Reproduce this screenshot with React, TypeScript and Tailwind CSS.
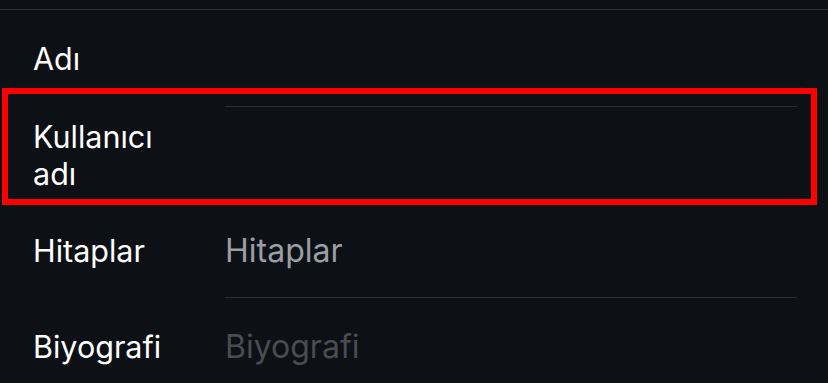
const rows = [
  { label: ["Adı"], value: "", tone: "", h: "h-[96px]", line: true },
  { label: ["Kullanıcı", "adı"], value: "", tone: "", h: "h-[95px]", line: true },
  { label: ["Hitaplar"], value: "Hitaplar", tone: "text-[#9b9ea5]", h: "h-[94px]", line: true },
  { label: ["Biyografi"], value: "Biyografi", tone: "text-[#4a4c52]", h: "h-[96px]", line: false },
];

const App = () => {
  return (
    <div className="relative h-[383px] w-full overflow-hidden bg-[#0d1015] font-['Inter','Noto_Sans',sans-serif] text-white">
      <div className="h-[9px]" />
      <div className="h-px bg-[#2a2c31]" />
      {rows.map((r, i) => (
        <div key={i} className="flex">
          <div className={`flex w-[225px] shrink-0 flex-col justify-center pl-[33px] text-[30.5px] leading-[37px] ${r.h}`}>
            {r.label.map((l) => (
              <span key={l}>{l}</span>
            ))}
          </div>
          <div className={`mr-[31px] flex flex-1 flex-col ${r.line ? "border-b border-[#2a2c31]" : ""}`}>
            <div className={`flex items-center pt-[1px] text-[32px] leading-[37px] ${r.h} ${r.tone}`}>{r.value}</div>
          </div>
        </div>
      ))}
      <div className="absolute left-[2px] top-[88px] h-[117px] w-[815px] border-[6px] border-[#ff0000]" />
    </div>
  );
};

export default App;
